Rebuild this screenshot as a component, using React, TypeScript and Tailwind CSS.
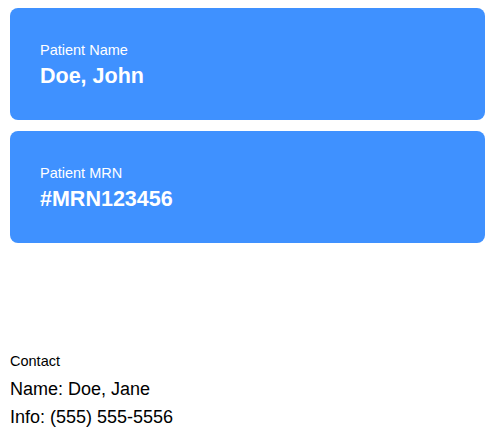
const InfoCard: React.FC<{ label: string; value: string }> = ({ label, value }) => {
    return (
        <div className="rounded-lg bg-[#3f91ff] px-[30px] pb-[31px] pt-8 text-white">
            <div className="text-[14.5px] leading-[21px]">{label}</div>
            <div className="mt-[3px] text-[21.5px] font-bold leading-[25px]">{value}</div>
        </div>
    );
};

export default function App() {
    return (
        <div className="min-h-[434px] bg-white pl-[10px] pr-[8px] pt-2 font-['Liberation_Sans',Arial,sans-serif]">
            <div className="flex flex-col gap-[11px]">
                <InfoCard label="Patient Name" value="Doe, John" />
                <InfoCard label="Patient MRN" value="#MRN123456" />
            </div>
            <div className="mt-[108px] text-black">
                <div className="mb-[3px] text-[14.5px] leading-[21px]">Contact</div>
                <div className="text-[18px] leading-[28px]">Name: Doe, Jane</div>
                <div className="text-[18px] leading-[28px]">Info: (555) 555-5556</div>
            </div>
        </div>
    );
}
